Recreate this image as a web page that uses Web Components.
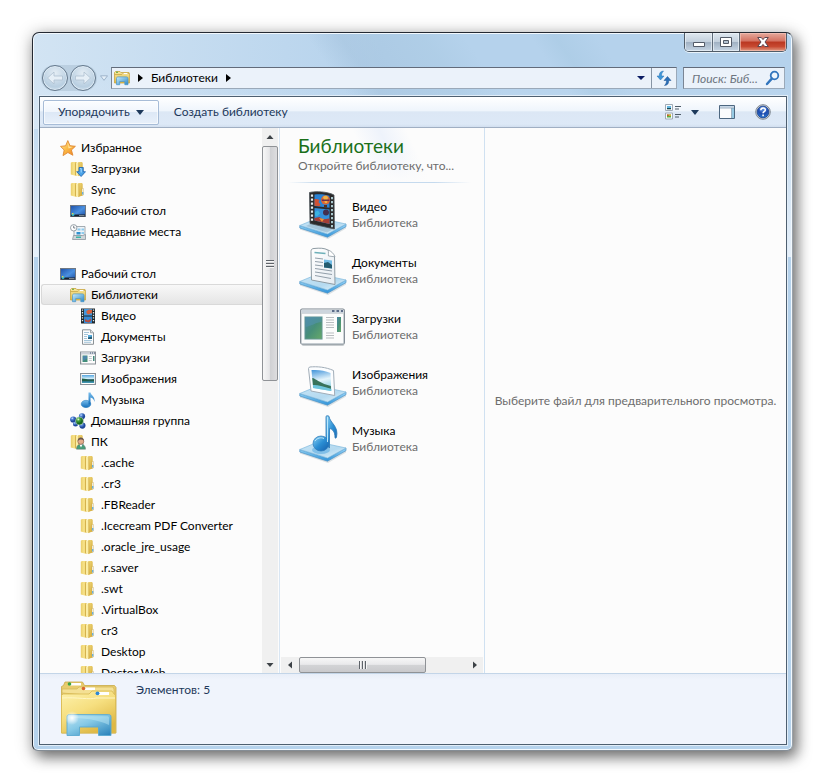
<!DOCTYPE html>
<html lang="ru">
<head>
<meta charset="utf-8">
<title>Библиотеки</title>
<style>
  html, body { margin: 0; height: 100%; }
  body {
    box-sizing: border-box; display: flex; min-height: 420px; overflow: hidden;
    padding: 32px 33px 33px 32px; background: #fff;
    font: 12px/16px Lato, "Open Sans", "Noto Sans", sans-serif; color: #000;
  }
</style>
</head>
<body>
<explorer-window>
  <caption-buttons slot="caption"></caption-buttons>
  <address-row slot="address">Библиотеки</address-row>
  <command-bar slot="commands"></command-bar>
  <nav-tree slot="tree">
    <tree-item icon="star" level="0">Избранное</tree-item>
    <tree-item icon="folderdown" level="1">Загрузки</tree-item>
    <tree-item icon="folder" level="1">Sync</tree-item>
    <tree-item icon="desktop" level="1">Рабочий стол</tree-item>
    <tree-item icon="recent" level="1">Недавние места</tree-item>
    <tree-item icon="desktop" level="0" gap>Рабочий стол</tree-item>
    <tree-item icon="library" level="1" selected>Библиотеки</tree-item>
    <tree-item icon="film" level="2">Видео</tree-item>
    <tree-item icon="doc" level="2">Документы</tree-item>
    <tree-item icon="app" level="2">Загрузки</tree-item>
    <tree-item icon="picture" level="2">Изображения</tree-item>
    <tree-item icon="music" level="2">Музыка</tree-item>
    <tree-item icon="homegroup" level="1">Домашняя группа</tree-item>
    <tree-item icon="user" level="1">ПК</tree-item>
    <tree-item icon="folder" level="2">.cache</tree-item>
    <tree-item icon="folder" level="2">.cr3</tree-item>
    <tree-item icon="folder" level="2">.FBReader</tree-item>
    <tree-item icon="folder" level="2">.Icecream PDF Converter</tree-item>
    <tree-item icon="folder" level="2">.oracle_jre_usage</tree-item>
    <tree-item icon="folder" level="2">.r.saver</tree-item>
    <tree-item icon="folder" level="2">.swt</tree-item>
    <tree-item icon="folder" level="2">.VirtualBox</tree-item>
    <tree-item icon="folder" level="2">cr3</tree-item>
    <tree-item icon="folder" level="2">Desktop</tree-item>
    <tree-item icon="folder" level="2">Doctor Web</tree-item>
  </nav-tree>
  <library-pane slot="content">
    <span slot="title">Библиотеки</span>
    <span slot="subtitle">Откройте библиотеку, что...</span>
    <library-item icon="bigvideo">Видео</library-item>
    <library-item icon="bigdoc">Документы</library-item>
    <library-item icon="bigapp">Загрузки</library-item>
    <library-item icon="bigpic">Изображения</library-item>
    <library-item icon="bigmusic">Музыка</library-item>
  </library-pane>
  <preview-pane slot="preview">Выберите файл для предварительного просмотра.</preview-pane>
  <details-pane slot="details">Элементов: 5</details-pane>
</explorer-window>

<script>
const folderBody = `
  <defs><linearGradient id="a"><stop offset="0" stop-color="#e9cd68"/><stop offset=".6" stop-color="#f9e58e"/><stop offset="1" stop-color="#d8b03c"/></linearGradient>
  <linearGradient id="b" x2="1" y2="1"><stop offset="0" stop-color="#f4dd83"/><stop offset="1" stop-color="#cfa42e"/></linearGradient></defs>
  <path d="M.8 1.800 2 1h4.500v14L.8 13.500z" fill="url(#a)"/>
  <path d="M8 1h4l.7 1v11.500L8 15z" fill="url(#b)"/>
  <path d="M5.500 2.200 9 1v14.300L5.500 14z" fill="#fbedA5"/><path d="M5.500 2.200V14M8.800 1.500V15" stroke="#c8a136" stroke-width=".7"/>
  <path d="M12 6.500h1.500V13H12z" fill="#f5f8fa" stroke="#c9a94f" stroke-width=".4"/><path d="M12.200 10h1.100v2.600h-1.100z" fill="#4ba3e0"/>`;
const monitor = `
  <defs><linearGradient id="a" x2="1" y2="1"><stop offset="0" stop-color="#1d4fa8"/><stop offset=".55" stop-color="#4a90e0"/><stop offset="1" stop-color="#1c4c9e"/></linearGradient></defs>
  <rect x=".5" y="2.500" width="15" height="11" fill="url(#a)" stroke="#6f7883"/>
  <path d="M1 11.500h14V13.500H1z" fill="#16202c"/><path d="M9 12h5.500v1H9z" fill="#77838e"/><circle cx="3" cy="11.500" r="1.500" fill="#38b8c9"/><path d="M2 10h1.300v1.300H2z" fill="#f0d43c"/>`;
const base = `
  <defs><linearGradient id="p" x2="1" y2="1"><stop offset="0" stop-color="#c5e4f6"/><stop offset=".6" stop-color="#b5daf0"/><stop offset="1" stop-color="#e6f6fd"/></linearGradient>
  <linearGradient id="q"><stop offset="0" stop-color="#83c7ee"/><stop offset=".6" stop-color="#3999dc"/><stop offset="1" stop-color="#8fcff5"/></linearGradient></defs>
  <path d="M1 35.500 29 44.500 47 34.500v3L29 48 1 38.500z" fill="#9ba9b3" opacity=".35"/>
  <path d="M.8 34.500 28.500 43 47 33v2.600L28.500 46.200.8 37z" fill="url(#q)" stroke="#4b92c5" stroke-width=".7"/>
  <path d="M.8 34.500 19 27 47 33 28.500 43z" fill="url(#p)" stroke="#80b9dc" stroke-width=".7"/>`;
const ICONS = {
  folder: [16, folderBody],
  folderdown: [16, folderBody + `<path d="M9 6.500h4.200v4.200h2.300L11.100 15.500 6.700 10.700H9z" fill="#4ba3e8" stroke="#1b62b3" stroke-width=".8"/><path d="M10.200 7.500h1v4" stroke="#a9dcff" fill="none"/>`],
  star: [16, `<defs><linearGradient id="a" x2="1" y2="1"><stop offset="0" stop-color="#fff0a0"/><stop offset=".5" stop-color="#fbb843"/><stop offset="1" stop-color="#ee7e24"/></linearGradient></defs>
    <path d="M7.800.6 10 5.700l5.400.6-4 3.700 1.500 5.300-5-2.800-4.900 3.100 1.200-5.600-3.700-3.600 5.100-.6z" fill="url(#a)" stroke="#e08a34" stroke-width=".9"/><path d="M7.800 2.500 9 6.500l4 .5-4.500 1.500z" fill="#fff6c8" opacity=".7"/>`],
  desktop: [16, monitor],
  recent: [16, `<path d="M4 12V2.500h11V12z" fill="#eef3f7" stroke="#8e989f" stroke-width=".8"/><path d="M7.500 4.500h3v2h-3zM11.500 4.500h2.500v2h-2.500zM11.500 8h2.500v2h-2.500z" fill="#8ecbed"/><path d="M6.500 8h4v2.500h-4z" fill="#2f91cf"/>
    <path d="M3.500 11.500h9l3-1v5h-13z" fill="#cfd5d9" stroke="#8b969d" stroke-width=".8"/><path d="M6 12.500h5v1.500H6z" fill="#3db5a9"/>
    <circle cx="3.700" cy="3.800" r="3.200" fill="#fff" stroke="#8c969e" stroke-width=".9"/><path d="M3.700 1.800V4h1.600" stroke="#54616b" fill="none" stroke-width=".8"/>`],
  library: [16, `<defs><linearGradient id="a" x2="0" y2="1"><stop offset="0" stop-color="#f9e9a0"/><stop offset="1" stop-color="#dfb843"/></linearGradient><linearGradient id="b" x2="1" y2="1"><stop offset="0" stop-color="#c9ecfa"/><stop offset="1" stop-color="#2a88c8"/></linearGradient></defs>
    <path d="M.5 13V2.500L1.500 1.500h4.500l.8 1h8.200l.6 1V13z" fill="url(#a)" stroke="#c9a640" stroke-width=".8"/><path d="M2 1.800h2v1H2z" fill="#52a23d"/><path d="M.8 4.500h7l1-1h6.500" stroke="#c4a03e" stroke-width=".7" fill="none"/><path d="M9.500 3h4v1h-4z" fill="#fff"/>
    <path d="M2.500 14.700V8.500c0-1 .6-1.600 1.600-1.600h8.300c1 0 1.600.6 1.600 1.600v6.200h-3.200V11.500H5.700v3.200z" fill="url(#b)" stroke="#4a97ca" stroke-width=".7"/>`],
  film: [16, `<path d="M1 .5h14v15H1z" fill="#20292e"/><path d="M4 1h8v6.500H4z" fill="#4397dc"/><path d="M4 8.500h8V15H4z" fill="#3589d4"/><path d="M9 1.500l3 .5v3L8 6.500 6.500 5V3z" fill="#d6623e"/><path d="M5 11l3 1.500 3-2v2l-2 2-4-1z" fill="#b94c3a"/>
    <path d="M2.500 1.500v13M13.500 1.500v13" stroke="#dfe8ea" stroke-width="1.300" stroke-dasharray="1.300 1.300"/>`],
  doc: [16, `<path d="M2.500.8h8l3 3v11.500h-11z" fill="#fbfcfd" stroke="#8c9397" stroke-width="1"/><path d="M10.500.8v3h3" fill="#dce1e5" stroke="#8c9397" stroke-width=".8"/><path d="M4 3.500h5M4 5.500h4M4 7.500h3M4 9.500h3M4 11.500h8M4 13.300h7" stroke="#8eb6d0" stroke-width=".8"/><path d="M8 6h4v4H8z" fill="#57aadc"/><path d="M8 8.500l4-1V10H8z" fill="#265f79"/>`],
  app: [16, `<path d="M.6 2h15v12H.6z" fill="#fcfcfc" stroke="#8c9197" stroke-width="1.200"/><path d="M1 2.500h14v2H1z" fill="#cbd1d8"/><path d="M10 3h1M12 3h1M14 3h1" stroke="#3e5374"/><path d="M2.500 5.500h5V12h-5z" fill="#428d78"/><path d="M3 6h4v2.500L3 11z" fill="#4d87aa"/><path d="M8.800 6.500h3M8.800 8.500h3M8.800 10.500h3" stroke="#b6bdc0" stroke-width=".8"/><path d="M13 6h1.500v5H13z" fill="#44897c"/>`],
  picture: [16, `<defs><linearGradient id="a" x2="0" y2="1"><stop offset="0" stop-color="#55a5e0"/><stop offset=".45" stop-color="#d1eef9"/><stop offset=".6" stop-color="#174b57"/><stop offset="1" stop-color="#49a4c0"/></linearGradient></defs><path d="M.6 2.500h14.800v11H.6z" fill="#fff" stroke="#8a9197" stroke-width="1.200"/><path d="M2 4h12v8H2z" fill="url(#a)"/><path d="M2 7.500l4 .5 3 1.500 5-1v1.500H2z" fill="#226047"/>`],
  music: [16, `<defs><linearGradient id="a" x2="0" y2="1"><stop offset="0" stop-color="#78bdec"/><stop offset="1" stop-color="#126db9"/></linearGradient></defs><ellipse cx="6" cy="12" rx="4.800" ry="3.700" fill="url(#a)" stroke="#2476b8" stroke-width=".5"/><path d="M8.500.5h2c.5 3 4.800 4 4 9.500-.7-3-2-4.200-4-4.500v7h-2z" fill="url(#a)"/>`],
  homegroup: [16, `<defs><radialGradient id="a" cx=".35" cy=".3"><stop offset="0" stop-color="#e1f0ff"/><stop offset=".35" stop-color="#5a8ddd"/><stop offset="1" stop-color="#1f4799"/></radialGradient><radialGradient id="b" cx=".35" cy=".3"><stop offset="0" stop-color="#efffdc"/><stop offset=".4" stop-color="#48a637"/><stop offset="1" stop-color="#16651f"/></radialGradient></defs><path d="M3 7 12 3.500 12 13z" fill="none" stroke="#6e8bc0" stroke-width="1.500"/><circle cx="3.200" cy="6.500" r="3.100" fill="url(#a)"/><circle cx="12" cy="3.300" r="3.100" fill="url(#a)"/><circle cx="12.400" cy="12.600" r="3.100" fill="url(#a)"/><circle cx="5.500" cy="11" r="2.500" fill="url(#a)"/><circle cx="9.500" cy="8" r="4" fill="url(#b)" stroke="#e2eef0" stroke-width=".5"/>`],
  user: [16, folderBody + `<path d="M6.500 15.200c0-3.500 1.500-4.700 4.500-4.700s4.500 1.500 4.500 4.700z" fill="#459d79" stroke="#6c7470" stroke-width=".5"/><path d="M9.500 10.500h3L11 13.500z" fill="#fff"/><circle cx="10.800" cy="7.300" r="3" fill="#e4ac8b" stroke="#79564b" stroke-width=".6"/><path d="M7.700 7c0-4.500 6.200-4.500 6.200-.5-1.500-1.300-4-1.500-6.200.5z" fill="#68564d"/>`],
  bigvideo: [48, base + `<path d="M11 33 35.500 37.500 28 41.500 7 35z" fill="#7d99ab" opacity=".35"/>
    <path d="M10.500 1.500C17 0 28 .5 35 4l.4 34L11 32.500z" fill="#2b2a2b" stroke="#495156" stroke-width=".8"/>
    <path d="M15.500 3.500c5-.7 11-.3 15 1.300v12L15.500 15z" fill="#2a83d5"/><path d="M15.500 17 30.500 18.500v14.500L15.500 29.600z" fill="#348fda"/>
    <path d="M15.500 8c2 0 4 .2 5 1l-1 2 2 2.500-1 1.800-5-.5z" fill="#d05335"/><circle cx="26.500" cy="9" r="4.500" fill="#dd6735"/><path d="M24 6c2-2 4-1 5 0l-1 6h-2z" fill="#efb343"/><path d="M22.500 8.500h8v1.500h-7.500z" fill="#6d2f4d"/><path d="M25 14h3v2.500h-3z" fill="#513020"/>
    <circle cx="27" cy="21.500" r="3" fill="#432f4e"/><path d="M16 21l3-1.500 2 3-3 3-2-1z" fill="#3cb3e0"/><path d="M15.500 27l5-1 3 2.500 7-1V33l-15-3.400z" fill="#a43e36"/><path d="M20 27l5 1-2 3z" fill="#ed9437"/>
    <path d="M13 3.500v28" stroke="#e6eff2" stroke-width="2.200" stroke-dasharray="2.200 1.800"/><path d="M33 6v31" stroke="#aac9cf" stroke-width="2" stroke-dasharray="2.200 1.800"/>`],
  bigdoc: [48, base + `<defs><linearGradient id="d" x2="1" y2="1"><stop offset="0" stop-color="#fff"/><stop offset="1" stop-color="#e6ecf2"/></linearGradient></defs>
    <path d="M12.500 33 12 4.500C12 2.500 13 1.500 15 1.500c6-.6 10-.5 14 1.500l6.500 6 .5 28.500z" fill="url(#d)" stroke="#8e9ba3"/><path d="M29 3c1 2 0 5 .5 6l6.500.8c-1-3-4-6-7-6.800z" fill="#fff" stroke="#8e9ba3" stroke-width=".8"/>
    <path d="M15.500 5.500l11 1" stroke="#6eb0b9" stroke-width="1.600"/><path d="M16 11l8 1M16 14.500l8 1M16 18l8 1M16 21.500l17 2.500M16 25l17 2.500M16 28.500l16 3" stroke="#929faa" stroke-width="1"/>
    <path d="M25 12.500l8 1v8l-8-1z" fill="#73bde7"/><path d="M25 16l4-1 4 3v3.500l-8-1z" fill="#245c70"/>`],
  bigapp: [48, `<defs><linearGradient id="a" x2="1" y2="1"><stop offset="0" stop-color="#4a87a6"/><stop offset=".5" stop-color="#478f78"/><stop offset="1" stop-color="#66a969"/></linearGradient></defs>
    <rect x="2.500" y="8" width="43" height="35" rx="2" fill="#929ba1" opacity=".5"/><rect x="1.700" y="6" width="43.600" height="35" rx="1.500" fill="#fdfdfd" stroke="#7a848d" stroke-width="1.200"/>
    <path d="M2.500 6.800h42V10h-42z" fill="#cdd5dd"/><path d="M33 8h2.500M37.500 8H40M42 8h2" stroke="#37496e" stroke-width="1.400"/>
    <path d="M2.500 10.500h42v30h-42z" fill="#fcfcfc" stroke="#b7bfc6" stroke-width=".6"/><path d="M5 13h19v24H5z" fill="#cde2df"/><path d="M6 14h17v22H6z" fill="url(#a)" stroke="#6f9799" stroke-width=".7"/><path d="M6.500 24c6-1 11-5 16-5v-5h-16z" fill="#5492ae" opacity=".6"/>
    <path d="M27 14.500h8M27 17h8M27 19.500h8M27 22h8M27 24.500h8M27 30h8M27 32.500h8M27 35h8" stroke="#b9bdc0" stroke-width="1"/><path d="M38 14h4v15h-4z" fill="url(#a)"/>`],
  bigpic: [48, base + `<defs><linearGradient id="s" x2=".2" y2="1"><stop offset="0" stop-color="#3f92d9"/><stop offset=".55" stop-color="#e4f4fb"/><stop offset=".75" stop-color="#bde3f0"/><stop offset="1" stop-color="#8dd4e6"/></linearGradient></defs>
    <path d="M12 32 9.500 9.500l1-1.500c8-.7 16 0 24 3.500l1.200 25z" fill="#fbfdff" stroke="#a1adb8" stroke-width="1"/><path d="M12.500 11c7-.4 13 .2 19 3l.8 18-18.300-3z" fill="url(#s)"/><path d="M13.200 19c2 0 4 2 6 3s4 2 6 3l6.700 2v3c-6-1-12-2-18-4z" fill="#37725a"/><path d="M14 26c6 0 12 2 18.300 4v2L14 29z" fill="#6dc4dc"/>`],
  bigmusic: [48, base + `<defs><linearGradient id="m" x2="1" y2="1"><stop offset="0" stop-color="#8dd3f5"/><stop offset=".5" stop-color="#2b8ed3"/><stop offset="1" stop-color="#155eab"/></linearGradient></defs>
    <ellipse cx="22" cy="35" rx="9" ry="4" fill="#4ba4df" opacity=".5"/><path d="M27 30V1.300c1-.9 2-.7 3 0 1 7 10 9.500 7.500 21-1 1.500-1.500 1-1.500 0C36 17 33.500 14 30.500 13.500V33z" fill="url(#m)" stroke="#2875b4" stroke-width=".8"/><ellipse cx="22" cy="28.500" rx="8" ry="7.500" fill="url(#m)" stroke="#2c78b7" stroke-width=".7"/><path d="M28.500 2v25" stroke="#b9e7fc" stroke-width="1"/><path d="M16 26c2-3 6-4 9-2.500" stroke="#bde6f9" fill="none"/>`],
  biglibrary: [58, `<defs><linearGradient id="a" x2=".6" y2="1"><stop offset="0" stop-color="#fdf2ae"/><stop offset=".5" stop-color="#f6df80"/><stop offset="1" stop-color="#dfb844"/></linearGradient><linearGradient id="b" x2=".9" y2="1"><stop offset="0" stop-color="#bfe6f5"/><stop offset=".45" stop-color="#86c9e6"/><stop offset="1" stop-color="#2f86bd"/></linearGradient><radialGradient id="g"><stop offset="0" stop-color="#fff"/><stop offset="1" stop-color="#fff" stop-opacity="0"/></radialGradient></defs>
    <path d="M1.500 53V6.500l2-1 1.500-3.500h17.500l2 3.500h30l1.500 2V53z" fill="#e8cc6d" stroke="#c9aa46" stroke-width=".8"/><path d="M9 3h12v2.500H9z" fill="#fff"/><circle cx="9.500" cy="4" r="1.800" fill="#3ca343"/>
    <path d="M2 13V9h15l2-2h34l1 2v8z" fill="#f4e094" stroke="#d1b456" stroke-width=".7"/><path d="M23 7.500h12V10H23z" fill="#fff"/><circle cx="23.500" cy="8.500" r="1.800" fill="#d9642b"/>
    <path d="M1.500 53V15.500L3 14h26l3-3h20l2 3 1.500 1V53z" fill="url(#a)" stroke="#d9ba52" stroke-width=".8"/><path d="M37 12h12v3H37z" fill="#fff"/><circle cx="37.500" cy="13.300" r="1.900" fill="#2d87d4"/><path d="M2 18c15-1 28 2 34 0h19" stroke="#fff6c6" fill="none"/>
    <path d="M7 55.500V37c0-1.600.8-2.400 2.400-2.400h39.200c1.600 0 2.400.8 2.400 2.400v18.500H38.500v-8.500h-19v8.500z" fill="url(#b)" stroke="#5aa9d1" stroke-width=".9"/><path d="M9 38c14 0 28 1 40 7v-7c0-1-.6-1.700-1.600-1.700H10z" fill="#c4ebf7" opacity=".45"/><circle cx="12" cy="38" r="7" fill="url(#g)"/>`],
  views: [16, `<path d="M.5.5h7v6h-7zM.5 9h7v6h-7z" fill="#f8fbfd" stroke="#9faab5"/><path d="M2 2h4v3H2z" fill="#63b6e1"/><path d="M2 4h4v1.300H2z" fill="#184851"/><path d="M2 10.500h4v3H2z" fill="#5caf3e"/><path d="M3.500 10.500H6v1.500H3.500z" fill="#e2a92e"/><path d="M2 10.500h1.500V12H2z" fill="#d14d2b"/><path d="M10 2.500h6M10 5h4M10 10.500h6M10 13h4" stroke="#4e5c68"/>`],
  pane: [16, `<path d="M.5 1.500h15v13H.5z" fill="#fbfcfd" stroke="#4d6780"/><path d="M1 2h14v1.500H1z" fill="#c6d7e7"/><path d="M13 4h2v10h-2z" fill="#95c9e3"/><path d="M1 4h14M12.500 4v10" stroke="#7690a7" stroke-width=".7"/>`],
  help: [16, `<defs><radialGradient id="a" cx=".5" cy=".2" r=".9"><stop offset="0" stop-color="#6da1ed"/><stop offset=".5" stop-color="#1d4bae"/><stop offset="1" stop-color="#3287dc"/></radialGradient></defs><circle cx="8" cy="8" r="7.300" fill="#d7dbe0" stroke="#7e8791"/><circle cx="8" cy="8" r="5.900" fill="url(#a)" stroke="#193f88" stroke-width=".8"/><path d="M5.800 6.300c.1-3 4.500-3 4.500-.4 0 1.900-2.200 1.700-2.200 3.300M8.100 10.600v1.700" stroke="#fff" stroke-width="1.600" fill="none"/>`],
  refresh: [16, `<path d="M7.500 1C4.300 1.200 3.200 3 3.300 6H1l3.500 4L8 6H5.500C5.500 4 6 2.500 7.500 1z" fill="#3f97d8" stroke="#2672b5" stroke-width=".5"/><path d="M8.500 15.500c3.200-.2 4.300-2 4.200-5H15l-3.500-4L8 10.500h2.500c0 2-.5 3.500-2 5z" fill="#2a6fb7" stroke="#194f90" stroke-width=".5"/>`],
  search: [16, `<circle cx="9.500" cy="5.500" r="3.800" fill="#eef6fd" stroke="#3275bd" stroke-width="1.800"/><path d="M6.800 8.600 2 14" stroke="#3275bd" stroke-width="2.400" stroke-linecap="round"/>`],
};
const define = (name, html, setup) => {
  const template = document.createElement('template');
  template.innerHTML = html;
  customElements.define(name, class extends HTMLElement {
    constructor() {
      super();
      this.attachShadow({ mode: 'open' }).append(template.content.cloneNode(true));
    }
    connectedCallback() { if (setup) setup(this, this.shadowRoot); }
  });
};
const placeIcon = (el, root) => {
  const icon = document.createElement('x-icon');
  icon.setAttribute('name', el.getAttribute('icon'));
  root.querySelector('a').prepend(icon);
};

define('x-icon', `<style>:host{display:block;flex:none;width:16px;height:16px}svg{display:block;width:100%;height:100%}</style><svg aria-hidden="true"></svg>`, (el, root) => {
  const [size, art] = ICONS[el.getAttribute('name')];
  const svg = root.querySelector('svg');
  svg.setAttribute('viewBox', `0 0 ${size} ${size}`);
  svg.innerHTML = art;
});

define('explorer-window', `<style>
  :host { flex: 1; min-width: 0; display: flex; }
  .frame {
    flex: 1; min-width: 0; display: flex; flex-direction: column; box-sizing: border-box;
    border: 1px solid #252a33; border-color: #252a33 #9aa2aa #858d95 #252a33; border-radius: 7px 7px 6px 6px;
    padding: 0 5px 5px 6px;
    background:
      linear-gradient(55deg, transparent 0 41%, #9dbcd766 45%, #a4c5dd55 55%, transparent 60% 68%, #a0c4dd55 71%, transparent 76%) 0 0 / 100% 96px no-repeat,
      linear-gradient(90deg, #e1edf7aa, #dceaf600 46%) 0 0 / 100% 96px no-repeat,
      linear-gradient(#b5d1ea00 20%, #e6f0fa) 0 0 / 100% 224px no-repeat,
      #b5d2ec;
    box-shadow: inset 0 0 0 1px #f2f8fd, 4px 6px 14px #00000080, 0 2px 18px 1px #00000030;
  }
  .title { height: 27px; display: flex; justify-content: flex-end; align-items: flex-start; }
  .client { flex: 1; min-height: 0; display: flex; flex-direction: column; border: 1px solid #4e5f70; box-shadow: 0 0 0 1px #e1edf8; background: #fcfcfc; }
  .panes { flex: 1; min-height: 0; display: grid; grid-template-columns: 240px 205px minmax(0, 1fr); grid-template-rows: minmax(0, 1fr); }
</style>
<main class="frame">
  <header class="title"><slot name="caption"></slot></header>
  <slot name="address"></slot>
  <section class="client">
    <slot name="commands"></slot>
    <div class="panes"><slot name="tree"></slot><slot name="content"></slot><slot name="preview"></slot></div>
    <slot name="details"></slot>
  </section>
</main>`);

define('caption-buttons', `<style>
  :host { display: flex; box-sizing: border-box; height: 19px; border: 1px solid #505c68; border-top: 0; border-radius: 0 0 5px 5px; overflow: hidden; box-shadow: 0 1px 0 #e8f2fa; }
  button { width: 27px; padding: 0; border: 0; border-right: 1px solid #5e6b79; display: grid; place-items: center;
    background: linear-gradient(#dfe8f0, #c3d0dd 48%, #9fb0c2 50%, #c6d5e4); box-shadow: inset 0 0 0 1px #eef4f9aa; }
  .min { width: 28px; }
  .close { width: 46px; border: 0; background: linear-gradient(#e5a99c, #d37160 45%, #ba3721 50%, #c74931 75%, #e19b83); box-shadow: inset 0 0 0 1px #f5c4b8aa; }
  svg { width: 14px; height: 12px; display: block; }
</style>
<button class="min" aria-label="Свернуть"><svg viewBox="0 0 14 12"><path d="M1.500 6.500h11v4h-11z" fill="#fff" stroke="#535b68"/></svg></button>
<button aria-label="Развернуть"><svg viewBox="0 0 14 12"><path d="M1.500 1.500h11v9h-11z" fill="#fff" stroke="#535b68"/><path d="M4.500 4.500h5v3h-5z" fill="#b4c3d2" stroke="#535b68"/></svg></button>
<button class="close" aria-label="Закрыть"><svg viewBox="0 0 14 12"><path d="M1.700 1.500h3.600L7 3.600l1.700-2.100h3.600L9 6l3.300 4.500H8.700L7 8.400l-1.700 2.100H1.700L5 6z" fill="#fff" stroke="#5c4650"/></svg></button>`);

define('address-row', `<style>
  :host { display: flex; align-items: center; height: 36px; gap: 3px; padding: 0 2px; }
  .nav { display: flex; align-items: center; border-radius: 14px; background: #94aabd55; gap: 2px; padding: 0 1px; }
  .nav button { width: 26px; height: 26px; padding: 0; border-radius: 50%; border: 1px solid #65798d; background: radial-gradient(circle at 50% 30%, #e4edf5, #b9cfe1 65%, #dcebf6); box-shadow: inset 0 0 0 1px #eaf3faaa; }
  .nav svg { display: block; width: 24px; height: 24px; }
  .recent { width: 8px; height: 16px; padding: 0; border: 0; background: none; }
  .recent svg { display: block; width: 8px; height: 6px; }
  .bar, .search { box-sizing: border-box; height: 22px; display: flex; align-items: center; border: 1px solid #9aa9b9; border-top-color: #626b7a; border-left-color: #7a8594; background: #ebf2fa; }
  .bar { flex: 1; min-width: 0; }
  .path { flex: 1; min-width: 0; display: flex; align-items: center; gap: 8px; padding: 0 2px; }
  .path button, .search button, .bar > button { font: inherit; color: inherit; padding: 0; border: 0; background: none; }
  .tri { width: 0; height: 0; border: 4px solid transparent; border-left: 5px solid #000; border-right: 0; }
  .bar > .drop { width: 20px; height: 20px; display: grid; place-items: center; }
  .down { width: 0; height: 0; border: 4px solid transparent; border-top: 4px solid #0b1c63; border-bottom: 0; }
  .bar > .refresh { width: 25px; height: 20px; border-left: 1px solid #8795a5; display: grid; place-items: center; }
  .search { width: 102px; padding: 0 3px 0 8px; margin-left: 3px; gap: 1px; }
  input { flex: 1; width: 0; min-width: 0; height: 18px; padding: 0; border: 0; outline: 0; background: none; font: inherit; font-style: italic; color: #6d7580; }
  input::placeholder { color: #6d7580; opacity: 1; }
</style>
<div class="nav">
  <button aria-label="Назад"><svg viewBox="0 0 24 24"><path d="M4.500 12 11 6v4h8.500v4H11v4z" fill="#e6eff7" stroke="#aec0d1" stroke-width=".8"/></svg></button>
  <button aria-label="Вперёд"><svg viewBox="0 0 24 24"><path d="M19.500 12 13 6v4H4.500v4H13v4z" fill="#e6eff7" stroke="#aec0d1" stroke-width=".8"/></svg></button>
</div>
<button class="recent" aria-label="Последние страницы"><svg viewBox="0 0 8 6"><path d="M.5.8h7L4 5.300z" fill="#e5f0f9" stroke="#8fa7c0" stroke-width=".8"/></svg></button>
<div class="bar">
  <div class="path"><x-icon name="library"></x-icon><span class="tri"></span><button><slot></slot></button><span class="tri"></span></div>
  <button class="drop" aria-label="Журнал"><span class="down"></span></button>
  <button class="refresh" aria-label="Обновить"><x-icon name="refresh"></x-icon></button>
</div>
<div class="search"><input aria-label="Поиск" placeholder="Поиск: Биб..."><button aria-label="Найти"><x-icon name="search"></x-icon></button></div>`);

define('command-bar', `<style>
  :host { display: flex; align-items: center; box-sizing: border-box; height: 31px; padding: 0 15px 0 3px; gap: 15px; color: #1e395b;
    border-bottom: 1px solid #a0afc3; background: linear-gradient(#fff, #eff5fc 45%, #dce7f5 50%, #dde9f7 90%, #d2dfef); }
  button { font: inherit; color: inherit; padding: 0; border: 0; background: none; display: flex; align-items: center; gap: 6px; }
  .organize { box-sizing: border-box; height: 25px; padding: 0 14px; border: 1px solid #a7bcd7; border-radius: 2px; background: linear-gradient(#fbfdff, #f0f5fc 48%, #dde8f6 50%, #e8f0fa); box-shadow: inset 0 0 0 1px #fff9; }
  .down { width: 0; height: 0; border: 4px solid transparent; border-top: 5px solid #1e395b; border-bottom: 0; }
  .right { margin-left: auto; display: flex; gap: 20px; }
  .views { gap: 10px; }
</style>
<button class="organize">Упорядочить<span class="down"></span></button>
<button>Создать библиотеку</button>
<div class="right">
  <button class="views" aria-label="Изменить представление"><x-icon name="views"></x-icon><span class="down"></span></button>
  <button aria-label="Область просмотра"><x-icon name="pane"></x-icon></button>
  <button aria-label="Справка"><x-icon name="help"></x-icon></button>
</div>`);

define('scroll-bar', `<style>
  :host { display: grid; grid-template: 18px 235px 1fr 16px / 16px; background: #f0f0f0; }
  :host([horizontal]) { grid-template: 16px / 18px 127px 1fr 17px; }
  button { padding: 0; border: 0; background: none; display: grid; place-items: center; }
  svg { display: block; width: 8px; height: 8px; }
  .thumb { box-sizing: border-box; border: 1px solid #8f9296; border-radius: 2px; display: grid; place-items: center; background: linear-gradient(90deg, #f7f7f7, #e6e6e8 46%, #cfd0d3 50%, #dddddf); }
  :host([horizontal]) .thumb { background: linear-gradient(#f7f7f7, #e9e9eb 46%, #d3d4d6 50%, #c9c9cc); }
  .grip { width: 8px; height: 8px; background: repeating-linear-gradient(#5e6369 0 1px, #f6f6f6 1px 2px, #d8d8da 2px 3px); }
  :host([horizontal]) .grip { background: repeating-linear-gradient(90deg, #5e6369 0 1px, #f6f6f6 1px 2px, #d8d8da 2px 3px); }
  :host([horizontal]) svg { transform: rotate(-90deg); }
</style>
<button aria-label="Прокрутить назад"><svg viewBox="0 0 8 8"><path d="M.5 6 4 2l3.500 4z" fill="#3d4247"/></svg></button>
<span class="thumb"><span class="grip"></span></span><span></span>
<button aria-label="Прокрутить вперёд"><svg viewBox="0 0 8 8"><path d="M.5 2 4 6l3.500-4z" fill="#3d4247"/></svg></button>`);

define('nav-tree', `<style>
  :host { display: flex; min-height: 0; box-sizing: border-box; border-right: 1px solid #d9e6f3; padding-right: 1px; }
  nav { flex: 1; min-width: 0; overflow: hidden; padding: 9px 0 0 1px; }
</style><nav aria-label="Область переходов"><slot></slot></nav><scroll-bar></scroll-bar>`);

define('tree-item', `<style>
  :host { display: block; }
  :host([gap]) { margin-top: 21px; }
  a { display: flex; align-items: center; box-sizing: border-box; height: 21px; gap: 5px; padding-left: 18px; border: 1px solid transparent; border-right: 0; color: #000; text-decoration: none; white-space: nowrap; }
  :host([level="1"]) a { padding-left: 28px; }
  :host([level="2"]) a { padding-left: 38px; }
  :host([selected]) a { border-color: #d9d9d9; border-radius: 3px 0 0 3px; background: linear-gradient(#f8f8f8, #e5e5e5); }
</style><a href="#"><slot></slot></a>`, placeIcon);

define('library-pane', `<style>
  :host { display: flex; flex-direction: column; min-height: 0; min-width: 0; box-sizing: border-box; border-right: 1px solid #d0e1f1; padding: 0 1px; }
  header { box-sizing: border-box; height: 54px; padding: 6px 0 0 17px; background: linear-gradient(#fcfcfc00 40%, #fcfcfc), linear-gradient(65deg, #fcfcfc 42%, #eef3fb 54%, #fcfcfc 66%); white-space: nowrap; color: #6d6d6d; }
  h1 { margin: 0; font: inherit; font-size: 19px; line-height: 24px; color: #1a701a; }
  p { margin: 0; }
  hr { flex: none; height: 1px; margin: 0 12px 4px 7px; border: 0; background: linear-gradient(90deg, transparent, #c5daee 15% 80%, transparent); }
  .list { flex: 1; min-height: 0; overflow: hidden; }
</style>
<header><h1><slot name="title"></slot></h1><p><slot name="subtitle"></slot></p></header><hr>
<div class="list"><slot></slot></div><scroll-bar horizontal></scroll-bar>`);

define('library-item', `<style>
  :host { display: block; }
  a { display: flex; align-items: center; gap: 5px; height: 56px; padding-left: 18px; color: #000; text-decoration: none; }
  x-icon { width: 48px; height: 48px; }
  small { display: block; font-size: 12px; color: #6d6d6d; }
</style><a href="#"><span><slot></slot><small>Библиотека</small></span></a>`, placeIcon);

define('preview-pane', `<style>:host { display: grid; place-items: center; min-width: 0; color: #6d6d6d; text-align: center; } p { margin: 0; }</style><p><slot></slot></p>`);

define('details-pane', `<style>
  :host { display: flex; align-items: flex-start; gap: 18px; box-sizing: border-box; height: 71px; padding: 6px 20px; border-top: 1px solid #c3d5e8; background: linear-gradient(#e8eef8, #f0f4fc 6px); color: #1e395b; }
  x-icon { width: 58px; height: 58px; }
  span { padding-top: 2px; }
</style><x-icon name="biglibrary"></x-icon><span><slot></slot></span>`);
</script>
</body>
</html>
